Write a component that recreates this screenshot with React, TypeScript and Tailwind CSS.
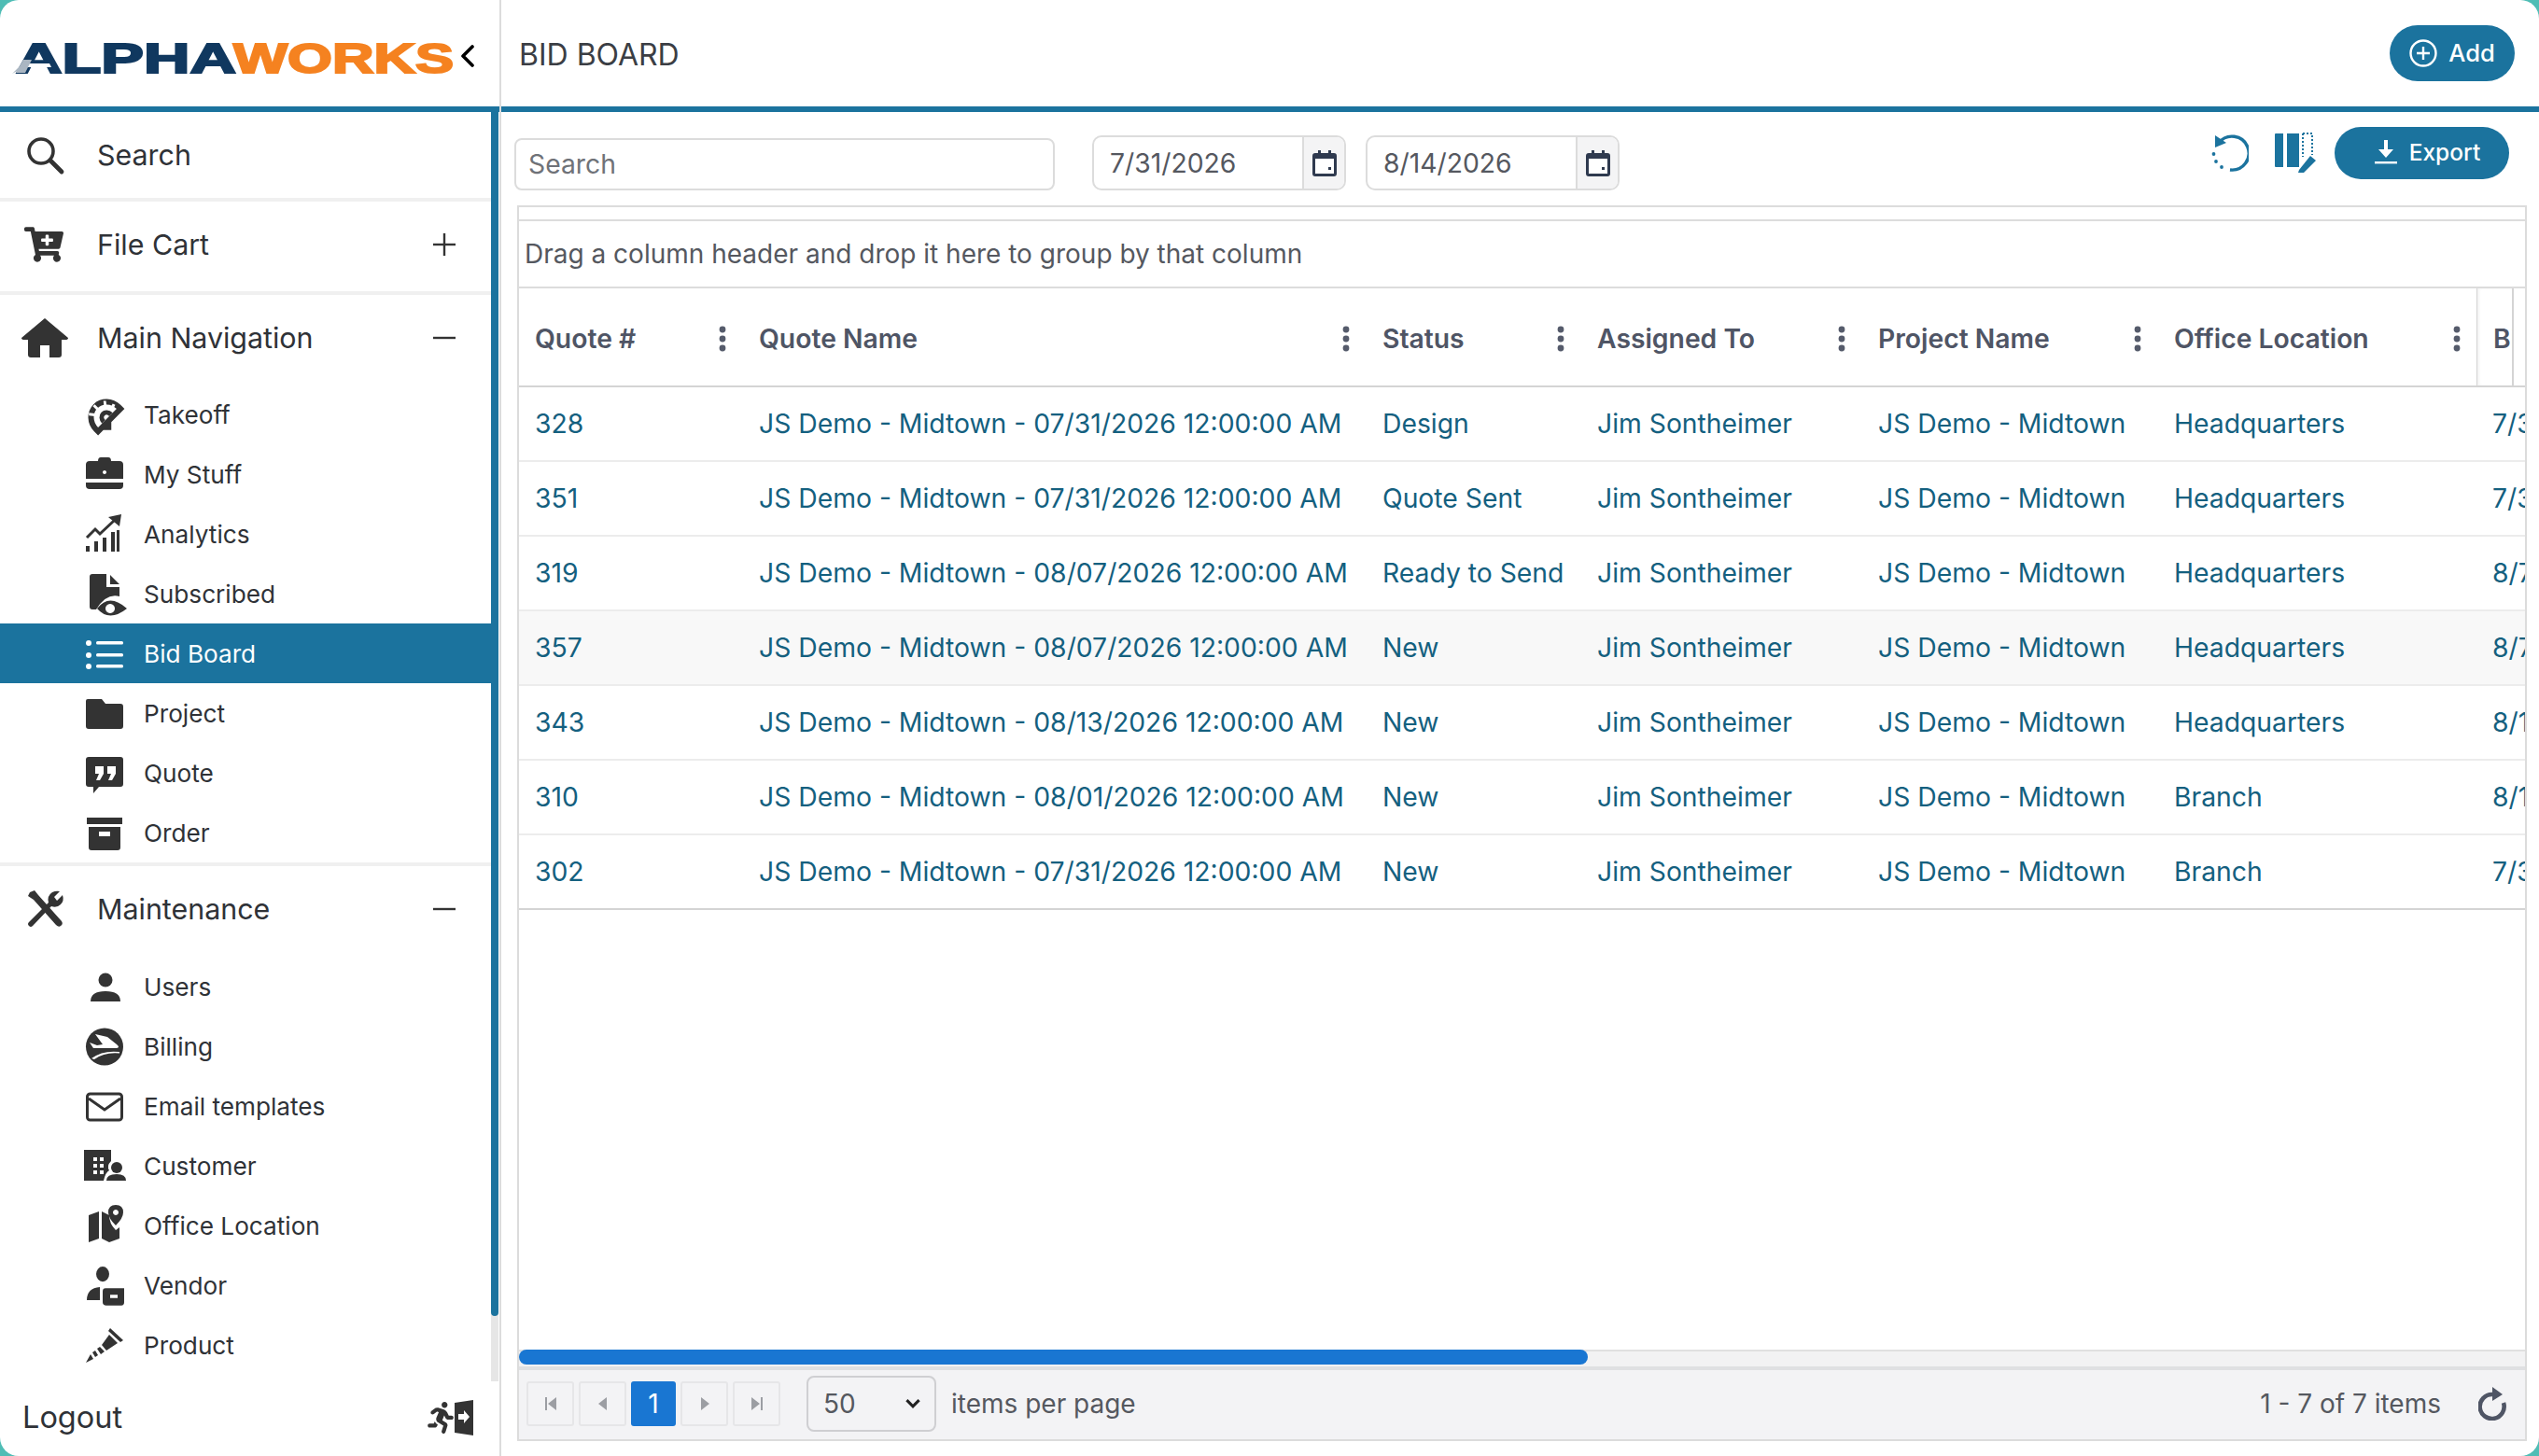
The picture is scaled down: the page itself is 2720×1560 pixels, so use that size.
import React from 'react';
import { FaCartPlus, FaRunning } from 'react-icons/fa';

const Ic: React.FC<{ children: React.ReactNode; className?: string; t?: string }> = ({ children, className, t }) => (
  <svg viewBox="0 0 40 40" className={className ?? 'w-[40px] h-[40px] fill-[#333333] shrink-0 overflow-visible'}>
    <g transform={t}>{children}</g>
  </svg>
);

const SearchIcon = () => (
  <Ic>
    <circle cx="16" cy="16" r="13" fill="none" stroke="#333" strokeWidth="3.6" />
    <path d="M26 26 L38 38" stroke="#333" strokeWidth="4.8" strokeLinecap="round" />
  </Ic>
);
const HomeIcon = () => (
  <svg viewBox="0 0 50 42" className="w-[50px] h-[42px] -mx-[5px] fill-[#333333] shrink-0">
    <path d="M25 0 L50 21 Q50 23 47 23 H43 V39 Q43 42 40 42 H30 V29 H20 V42 H10 Q7 42 7 39 V23 H3 Q0 23 0 21 Z" />
  </svg>
);
const ToolsIcon = () => (
  <Ic>
    <path d="M4 2 L9 0 L13 5 L38 33 Q40 36 37 38 Q35 40 32 37 L8 10 L2 6 Z" />
    <path d="M3 34 L24 13 Q22 6 28 2 Q32 0 36 1 L30 7 L33 11 L39 5 Q41 11 37 15 Q33 19 27 17 L7 38 Q5 40 3 38 Q1 36 3 34 Z" />
  </Ic>
);
const TakeoffIcon = () => (
  <Ic t="translate(-3 -2) rotate(-45 26 26)">
    <path fillRule="evenodd" d="M6 26 A20 21 0 0 1 46 26 V32 H26 L20 38 L14 32 H6 Z M12 26 H40 A14 15 0 0 0 12 26 Z" />
    <path d="M24 6 h3 v6 h-3 z M36 10 l2 2 -4 5 -2 -2 z M14 10 l2 -2 4 5 -2 2 z M41 19 l1 3 -6 2 -1 -3 z" fill="#fff" />
    <path d="M18 26 A8 9 0 0 1 34 26 H29 A3 4 0 0 0 23 26 Z" />
  </Ic>
);
const BriefcaseIcon = () => (
  <Ic t="translate(0 1)">
    <path fillRule="evenodd" d="M13 5 Q13 1 16 1 H24 Q27 1 27 5 H36 Q40 5 40 9 V24 H0 V9 Q0 5 4 5 Z M20 15 a2 2 0 1 0 .01 0 Z" />
    <path d="M0 28 H40 V31 Q40 35 36 35 H4 Q0 35 0 31 Z" />
  </Ic>
);
const AnalyticsIcon = () => (
  <Ic t="translate(0 -1)">
    <path d="M0 34 h4 v6 h-4 z M9 29 h4 v11 h-4 z M18 25 h4 v15 h-4 z M27 19 h4 v21 h-4 z M33 17 h3 v23 h-3 z" />
    <path d="M1 25 L10 16 L15 21 L30 7" fill="none" stroke="#333" strokeWidth="3" />
    <path d="M24 3 L38 0 L36 13 Z" />
  </Ic>
);
const SubscribedIcon = () => (
  <Ic t="translate(0 -1)">
    <path d="M7 0 H22 V14 H36 V24 Q22 20 11 38 H7 Q4 38 4 35 V3 Q4 0 7 0 Z M26 1 L36 11 H26 Z" />
    <path fillRule="evenodd" d="M12 37 Q25 20 44 37 Q25 52 12 37 Z M26 32 a5 5 0 1 0 .01 0 Z" />
  </Ic>
);
const ListIcon = () => (
  <Ic className="w-[40px] h-[40px] fill-white shrink-0 overflow-visible" t="translate(0 4)">
    <circle cx="3" cy="5" r="3" />
    <circle cx="3" cy="18" r="3" />
    <circle cx="3" cy="30" r="3" />
    <rect x="11" y="3" width="29" height="3.4" rx="1.5" />
    <rect x="11" y="16" width="29" height="3.4" rx="1.5" />
    <rect x="11" y="28" width="29" height="3.4" rx="1.5" />
  </Ic>
);
const FolderIcon = () => (
  <Ic t="translate(0 4)">
    <path d="M2 1 H17 L21 6 H37 Q40 6 40 9 V30 Q40 33 37 33 H3 Q0 33 0 30 V3 Q0 1 2 1 Z" />
  </Ic>
);
const QuoteIcon = () => (
  <Ic t="translate(0 3)">
    <path fillRule="evenodd" d="M3 0 H37 Q40 0 40 3 V29 Q40 32 37 32 H14 L8 39 V32 H3 Q0 32 0 29 V3 Q0 0 3 0 Z M10 10 V18 H14 L11 25 H15 L19 18 V10 Z M23 10 V18 H27 L24 25 H28 L32 18 V10 Z" />
  </Ic>
);
const OrderIcon = () => (
  <Ic t="translate(0 4)">
    <path d="M1 0 H39 V7 H1 Z" />
    <path fillRule="evenodd" d="M3 10 H37 V32 Q37 35 34 35 H6 Q3 35 3 32 Z M14 15 V20 H26 V15 Z" />
  </Ic>
);
const UsersIcon = () => (
  <Ic t="translate(-1 4)">
    <circle cx="22" cy="9" r="7.5" />
    <path d="M6 32 Q6 21 22 21 Q38 21 38 32 Z" />
  </Ic>
);
const BillingIcon = () => (
  <Ic>
    <ellipse cx="20" cy="20.5" rx="20" ry="20" />
    <path d="M10 7 L23 10 L33 18 Q37 21 33 22 L8 22 L4 16 L12 19 L18 18 Z" fill="#fff" />
    <path d="M6 33 Q18 24 36 26 L36 27.5 Q20 26 9 34 Z" fill="#fff" />
  </Ic>
);
const EmailIcon = () => (
  <Ic t="translate(0 5)">
    <rect x="1.5" y="2" width="37" height="28" rx="3" fill="none" stroke="#333" strokeWidth="3" />
    <path d="M3 7 L20 19 L37 7" fill="none" stroke="#333" strokeWidth="3" />
  </Ic>
);
const CustomerIcon = () => (
  <Ic t="translate(0 3)">
    <path fillRule="evenodd" d="M-2 0 H27 V12 Q22 17 25 22 Q21 24 19 33 H-2 Z M8 8 h4 v4 h-4 z M15 8 h4 v4 h-4 z M8 15 h4 v4 h-4 z M15 15 h4 v4 h-4 z M8 22 h4 v4 h-4 z M15 22 h4 v4 h-4 z" />
    <circle cx="33" cy="19" r="6" />
    <path d="M22 33 Q22 26 33 26 Q43 26 43 33 Z" />
  </Ic>
);
const OfficeIcon = () => (
  <Ic t="translate(-1 -2)">
    <path d="M4 11 L15 7 V36 L4 40 Z M18 7 L26 11 Q26 20 33 27 L37 24 V36 L26 40 L18 36 Z" />
    <path fillRule="evenodd" d="M33 0 Q41 0 41 8 Q41 14 33 22 Q25 14 25 8 Q25 0 33 0 Z M33 5 a3 3 0 1 0 .01 0 Z" />
  </Ic>
);
const VendorIcon = () => (
  <Ic t="scale(1 1.16)">
    <circle cx="18" cy="7" r="7" />
    <path d="M1 31 Q1 20 15 19 V31 Z" />
    <path fillRule="evenodd" d="M21 20 H41 V33 Q41 36 38 36 H22 Q18 36 18 33 V23 Q18 20 21 20 Z M26 26 V29 H34 V26 Z" />
  </Ic>
);
const ProductIcon = () => (
  <Ic t="translate(0 2)">
    <path d="M26 0 L40 13 L37 15 L24 3 Z" />
    <path d="M25 7 L34 16 L22 24 L17 18 Z" />
    <path d="M15 20 L20 25 L16 28 L12 22 Z M10 24 L13 29 L10 31 L7 26 Z M5 28 L8 33 L0 37 Z" />
  </Ic>
);

const Kebab = () => (
  <svg viewBox="0 0 8 28" className="w-[8px] h-[28px] fill-[#555b6b]">
    <circle cx="4" cy="4" r="3.4" />
    <circle cx="4" cy="14" r="3.4" />
    <circle cx="4" cy="24" r="3.4" />
  </svg>
);

const CalendarIcon = () => (
  <svg viewBox="0 0 26 28" className="w-[26px] h-[28px]">
    <path d="M6 0 h3 v3 h8 v-3 h3 v3 h3 q3 0 3 3 v19 q0 3 -3 3 h-20 q-3 0 -3 -3 v-19 q0 -3 3 -3 h3 z" fill="#2f3a4f" />
    <rect x="3" y="9" width="20" height="16" fill="#fff" />
    <rect x="17" y="18" width="3" height="3" fill="#2f3a4f" />
  </svg>
);

const DateBox: React.FC<{ value: string }> = ({ value }) => (
  <div className="w-[272px] h-[59px] mt-[9px] flex border-2 border-[#dcdcdc] rounded-[10px] overflow-hidden">
    <div className="w-[225px] border-r-2 border-[#dcdcdc] flex items-center pl-[17px] pt-[2px] text-[28.3px] text-[#55585f]">{value}</div>
    <div className="flex-1 bg-[#f4f4f5] flex items-center justify-center">
      <CalendarIcon />
    </div>
  </div>
);

type NavItem = { label: string; icon: React.ReactNode; active?: boolean };

const mainItems: NavItem[] = [
  { label: 'Takeoff', icon: <TakeoffIcon /> },
  { label: 'My Stuff', icon: <BriefcaseIcon /> },
  { label: 'Analytics', icon: <AnalyticsIcon /> },
  { label: 'Subscribed', icon: <SubscribedIcon /> },
  { label: 'Bid Board', icon: <ListIcon />, active: true },
  { label: 'Project', icon: <FolderIcon /> },
  { label: 'Quote', icon: <QuoteIcon /> },
  { label: 'Order', icon: <OrderIcon /> },
];

const maintItems: NavItem[] = [
  { label: 'Users', icon: <UsersIcon /> },
  { label: 'Billing', icon: <BillingIcon /> },
  { label: 'Email templates', icon: <EmailIcon /> },
  { label: 'Customer', icon: <CustomerIcon /> },
  { label: 'Office Location', icon: <OfficeIcon /> },
  { label: 'Vendor', icon: <VendorIcon /> },
  { label: 'Product', icon: <ProductIcon /> },
];

const NavRow: React.FC<{ item: NavItem }> = ({ item }) => (
  <div className={`h-[64px] flex items-center pl-[92px] ${item.active ? 'bg-[#1b739e] text-white' : 'text-[#2f3237]'}`}>
    {item.icon}
    <span className="ml-[22px] pt-[2px] text-[26.2px]">{item.label}</span>
  </div>
);

const SectionRow: React.FC<{ label: string; icon: React.ReactNode; sign?: '+' | '-'; className: string }> = ({ label, icon, sign, className }) => (
  <div className={`flex items-center pl-[28px] pr-[38px] ${className}`}>
    {icon}
    <span className="ml-[36px] pt-[1px] text-[30.4px] text-[#2f3237] flex-1">{label}</span>
    {sign && (
      <svg viewBox="0 0 24 24" className="w-[24px] h-[24px] stroke-[#333333]" strokeWidth="2.4">
        <path d="M0 12 H24" />
        {sign === '+' && <path d="M12 0 V24" />}
      </svg>
    )}
  </div>
);

const Sidebar = () => (
  <aside className="w-[537px] h-full shrink-0 flex flex-col border-r-2 border-[#dcdcdc]">
    <div className="h-[120px] shrink-0 border-b-[6px] border-[#1b739e] flex items-center relative">
      <svg viewBox="0 0 480 40" className="w-[480px] h-[40px] ml-[12px] mt-[10px]">
        <text x="5" y="36" fontFamily="Liberation Sans" fontWeight="700" fontSize="44" textLength="236" lengthAdjust="spacingAndGlyphs" fill="#10385f" stroke="#10385f" strokeWidth="2">ALPHA</text>
        <text x="238" y="36" fontFamily="Liberation Sans" fontWeight="700" fontSize="44" textLength="236" lengthAdjust="spacingAndGlyphs" fill="#f58220" stroke="#f58220" strokeWidth="2">WORKS</text>
        <path d="M12 26 H41 L43 30 H9 Z" fill="#fff" />
        <path d="M12 26 L8 33 L1 37 L12 26 Z M5 36 L13 22 L22 22 L15 36 Z" fill="#aab6c2" />
      </svg>
      <svg viewBox="0 0 16 24" className="w-[16px] h-[24px] absolute left-[493px] top-[48px]">
        <path d="M13 2 L3 12 L13 22" fill="none" stroke="#000" strokeWidth="3.6" strokeLinecap="round" strokeLinejoin="round" />
      </svg>
    </div>
    <div className="flex-1 min-h-0 flex">
      <div className="w-[526px] shrink-0">
        <SectionRow label="Search" icon={<SearchIcon />} className="h-[96px] border-b-4 border-[#f0f0f0]" />
        <SectionRow label="File Cart" icon={<FaCartPlus className="w-[42px] h-[40px] -ml-[2px] text-[#333333] shrink-0" />} sign="+" className="h-[100px] pb-[4px] border-b-4 border-[#f0f0f0]" />
        <SectionRow label="Main Navigation" icon={<HomeIcon />} sign="-" className="h-[96px] pb-[4px]" />
        <div className="border-b-4 border-[#f0f0f0]">
          {mainItems.map((item) => (
            <NavRow key={item.label} item={item} />
          ))}
        </div>
        <SectionRow label="Maintenance" icon={<ToolsIcon />} sign="-" className="h-[97px] pb-[5px]" />
        {maintItems.map((item) => (
          <NavRow key={item.label} item={item} />
        ))}
      </div>
      <div className="w-[8px] bg-[#e6e6e6]">
        <div className="h-[1290px] bg-[#1b739e] rounded-b-[4px]" />
      </div>
    </div>
    <div className="h-[80px] shrink-0 flex items-center pl-[24px] pr-[28px] pb-[2px] justify-between">
      <span className="text-[32.5px] text-[#2f3237]">Logout</span>
      <div className="flex items-center">
        <FaRunning className="w-[30px] h-[34px] text-[#333333]" />
        <svg viewBox="0 0 20 38" className="w-[20px] h-[38px]">
          <path fillRule="evenodd" d="M0 3 L20 0 V38 L0 35 Z M4 15 V21 H10 V25 L16 18 L10 11 V15 Z" fill="#333" />
        </svg>
      </div>
    </div>
  </aside>
);

const colWidths = ['w-[239px]', 'w-[668px]', 'w-[230px]', 'w-[301px]', 'w-[317px]', 'w-[342px]'];
const headers = ['Quote #', 'Quote Name', 'Status', 'Assigned To', 'Project Name', 'Office Location'];

const rows = [
  ['328', 'JS Demo - Midtown - 07/31/2026 12:00:00 AM', 'Design', 'Headquarters', '7/31/2026'],
  ['351', 'JS Demo - Midtown - 07/31/2026 12:00:00 AM', 'Quote Sent', 'Headquarters', '7/31/2026'],
  ['319', 'JS Demo - Midtown - 08/07/2026 12:00:00 AM', 'Ready to Send', 'Headquarters', '8/7/2026'],
  ['357', 'JS Demo - Midtown - 08/07/2026 12:00:00 AM', 'New', 'Headquarters', '8/7/2026'],
  ['343', 'JS Demo - Midtown - 08/13/2026 12:00:00 AM', 'New', 'Headquarters', '8/13/2026'],
  ['310', 'JS Demo - Midtown - 08/01/2026 12:00:00 AM', 'New', 'Branch', '8/1/2026'],
  ['302', 'JS Demo - Midtown - 07/31/2026 12:00:00 AM', 'New', 'Branch', '7/31/2026'],
];

const PagerBtn: React.FC<{ d: string }> = ({ d }) => (
  <div className="w-[51px] h-[48px] border-2 border-[#e6e6e8] rounded-[3px] flex items-center justify-center">
    <svg viewBox="0 0 20 20" className="w-[20px] h-[20px] fill-[#9c9ea3]">
      <path d={d} />
    </svg>
  </div>
);

const Grid = () => (
  <div className="w-[2153px] h-[1324px] ml-[17px] border-2 border-[#dcdcdc] flex flex-col overflow-hidden">
    <div className="h-[15px] shrink-0 border-b-2 border-[#dcdcdc]" />
    <div className="h-[72px] shrink-0 border-b-2 border-[#dcdcdc] flex items-center pl-[6px] text-[28px] text-[#55585f]">
      Drag a column header and drop it here to group by that column
    </div>
    <div className="h-[106px] shrink-0 flex border-b-2 border-[#d4d4d4]">
      {headers.map((h, i) => (
        <div key={h} className={`${colWidths[i]} shrink-0 flex items-center justify-between ${i === 0 ? 'pl-[17px]' : 'pl-[18px]'} pr-[17px] pt-[4px] text-[28.3px] font-semibold text-[#4f5565]`}>
          <span>{h}</span>
          <Kebab />
        </div>
      ))}
      <div className="w-[40px] shrink-0 border-r-2 border-l border-[#d4d4d4] shadow-[inset_2px_0_3px_rgba(0,0,0,0.05)] pl-[17px] pt-[4px] flex items-center text-[28.3px] font-semibold text-[#4f5565] overflow-hidden">
        Bid
      </div>
    </div>
    <div className="flex-1 min-h-0">
      {rows.map((r, idx) => (
        <div key={r[0]} className={`h-[80px] flex text-[28.3px] text-[#14607f] border-b-2 ${idx === 6 ? 'border-[#d4d4d4]' : 'border-[#ececec]'} ${idx === 3 ? 'bg-[#f8f8f8]' : ''}`}>
          <div className={`${colWidths[0]} shrink-0 pl-[17px] flex items-center`}>{r[0]}</div>
          <div className={`${colWidths[1]} shrink-0 pl-[18px] flex items-center whitespace-nowrap`}>{r[1]}</div>
          <div className={`${colWidths[2]} shrink-0 pl-[18px] flex items-center whitespace-nowrap`}>{r[2]}</div>
          <div className={`${colWidths[3]} shrink-0 pl-[18px] flex items-center whitespace-nowrap`}>Jim Sontheimer</div>
          <div className={`${colWidths[4]} shrink-0 pl-[18px] flex items-center whitespace-nowrap`}>JS Demo - Midtown</div>
          <div className={`${colWidths[5]} shrink-0 pl-[18px] flex items-center`}>{r[3]}</div>
          <div className="flex-1 min-w-0 pl-[17px] flex items-center overflow-hidden whitespace-nowrap">{r[4]}</div>
        </div>
      ))}
    </div>
    <div className="h-[18px] shrink-0 bg-[#f2f2f3] border-t-2 border-[#e0e0e0]">
      <div className="w-[1145px] h-[16px] -mt-[2px] bg-[#1976d2] rounded-full" />
    </div>
    <div className="h-[78px] shrink-0 bg-[#f3f3f5] border-t-4 border-[#dfe0e2] flex items-center pl-[8px] pr-[20px] pb-[3px] text-[28px] text-[#55585f]">
      <div className="flex gap-[5px]">
        <PagerBtn d="M4 3 h2 v14 h-2 z M16 3 v14 l-9 -7 z" />
        <PagerBtn d="M14 3 v14 l-9 -7 z" />
        <div className="w-[48px] h-[48px] bg-[#1976d2] text-white rounded-[3px] flex items-center justify-center text-[28px]">1</div>
        <PagerBtn d="M6 3 v14 l9 -7 z" />
        <PagerBtn d="M4 3 v14 l9 -7 z M14 3 h2 v14 h-2 z" />
      </div>
      <div className="w-[139px] h-[60px] ml-[28px] border-2 border-[#cfcfd2] rounded-[8px] flex items-center justify-between pl-[16px] pr-[14px]">
        <span>50</span>
        <svg viewBox="0 0 16 10" className="w-[18px] h-[11px]">
          <path d="M2 2 L8 8 L14 2" fill="none" stroke="#222" strokeWidth="2.8" />
        </svg>
      </div>
      <span className="ml-[16px]">items per page</span>
      <span className="ml-auto">1 - 7 of 7 items</span>
      <svg viewBox="0 0 30 36" className="w-[30px] h-[36px] ml-[40px]">
        <path d="M15 8 A13 13 0 1 0 27 17" fill="none" stroke="#4f5565" strokeWidth="4.6" />
        <path d="M15 0 L26 8 L15 15 Z" fill="#4f5565" />
      </svg>
    </div>
  </div>
);

export default function App() {
  return (
    <div className="w-[2720px] h-[1560px] bg-[#4fbdb5] overflow-hidden font-['Inter',sans-serif]">
      <div className="w-full h-full bg-white rounded-[20px] flex overflow-hidden">
        <Sidebar />
        <main className="flex-1 min-w-0 flex flex-col">
          <header className="h-[120px] shrink-0 border-b-[6px] border-[#1b739e] flex items-center justify-between pl-[19px] pr-[26px]">
            <h1 className="text-[32px] text-[#3b3e44] mt-[4px]">BID BOARD</h1>
            <button className="w-[134px] h-[60px] rounded-full bg-[#1b739e] text-white text-[25.5px] font-medium flex items-center justify-center gap-[12px]">
              <svg viewBox="0 0 30 30" className="w-[30px] h-[30px]" fill="none" stroke="#fff" strokeWidth="2.4">
                <circle cx="15" cy="15" r="13.5" />
                <path d="M15 8 V22 M8 15 H22" />
              </svg>
              Add
            </button>
          </header>
          <div className="h-[100px] shrink-0 flex items-start pt-[16px] pl-[14px] pr-[32px]">
            <input placeholder="Search" className="w-[579px] h-[56px] mt-[12px] border-2 border-[#dcdcdc] rounded-[8px] pl-[13px] text-[28.3px] placeholder:text-[#6f7278] outline-none" />
            <div className="w-[40px] shrink-0" />
            <DateBox value="7/31/2026" />
            <div className="w-[21px] shrink-0" />
            <DateBox value="8/14/2026" />
            <div className="ml-auto flex items-center h-[56px]">
              <svg viewBox="0 0 40 40" className="w-[40px] h-[40px]">
                <path d="M8 9 A18 18 0 1 1 20 38" fill="none" stroke="#1b739e" strokeWidth="3.4" />
                <path d="M4 1 L16 9 L4 14 Z" fill="#1b739e" />
                <circle cx="2.5" cy="21" r="1.9" fill="#1b739e" />
                <circle cx="5" cy="29" r="1.9" fill="#1b739e" />
                <circle cx="11" cy="35" r="1.9" fill="#1b739e" />
              </svg>
              <svg viewBox="0 0 44 44" className="w-[44px] h-[44px] ml-[28px]">
                <path d="M0 2 Q0 1 1 1 H9 V37 H1 Q0 37 0 36 Z M13 1 H26 V37 H13 Z" fill="#1b739e" />
                <path d="M30 1 H40 V24 M30 1 V26" fill="none" stroke="#1b739e" strokeWidth="2" strokeDasharray="2 2" />
                <path d="M26 40 L38 25 L44 30 L31 43 H25 Z" fill="#1b739e" />
              </svg>
              <button className="w-[187px] h-[56px] ml-[20px] pl-[12px] pb-[2px] rounded-full bg-[#1b739e] text-white text-[24.5px] font-medium flex items-center justify-center gap-[13px]">
                <svg viewBox="0 0 24 26" className="w-[24px] h-[26px]" fill="#fff">
                  <path d="M10 0 H14 V10 H20 L12 19 L4 10 H10 Z" />
                  <rect x="0" y="23" width="24" height="2.4" />
                </svg>
                Export
              </button>
            </div>
          </div>
          <Grid />
        </main>
      </div>
    </div>
  );
}
